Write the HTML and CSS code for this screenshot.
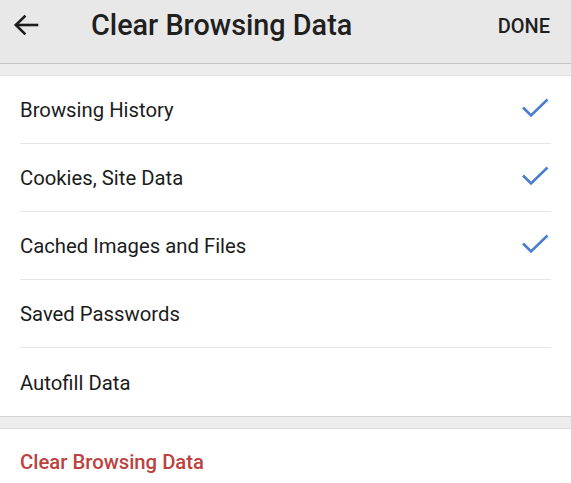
FILE: index.html
```html
<!DOCTYPE html>
<html lang="en">
<head>
<meta charset="utf-8">
<title>Clear Browsing Data</title>
<link rel="stylesheet" href="styles.css">
</head>
<body>
<header class="appbar">
  <button class="back" aria-label="Back">
    <svg width="26" height="22" viewBox="0 0 26 22" fill="none" stroke="#1c1c1c" stroke-width="2.6" stroke-linecap="square">
      <path d="M24 11H4"/>
      <path d="M11.5 2.5L2.8 11l8.7 8.5"/>
    </svg>
  </button>
  <h1 class="title">Clear Browsing Data</h1>
  <span class="done">DONE</span>
</header>
<div class="gap"></div>
<ul class="options">
  <li class="option"><span>Browsing History</span><svg class="check" width="28" height="20" viewBox="0 0 28 20" fill="none" stroke="#4a7dd0" stroke-width="2.6"><path d="M2 9.5l8 8L26.5 1.5"/></svg></li>
  <li class="option"><span>Cookies, Site Data</span><svg class="check" width="28" height="20" viewBox="0 0 28 20" fill="none" stroke="#4a7dd0" stroke-width="2.6"><path d="M2 9.5l8 8L26.5 1.5"/></svg></li>
  <li class="option"><span>Cached Images and Files</span><svg class="check" width="28" height="20" viewBox="0 0 28 20" fill="none" stroke="#4a7dd0" stroke-width="2.6"><path d="M2 9.5l8 8L26.5 1.5"/></svg></li>
  <li class="option"><span>Saved Passwords</span></li>
  <li class="option"><span>Autofill Data</span></li>
</ul>
<div class="gap"></div>
<div class="action">Clear Browsing Data</div>
</body>
</html>
```

FILE: styles.css
```css
* { box-sizing: border-box; }
html, body { margin: 0; padding: 0; }
body {
  width: 571px;
  height: 483px;
  overflow: hidden;
  background: #ffffff;
  font-family: Roboto, "Noto Sans", "Liberation Sans", sans-serif;
  color: #212121;
}
.appbar {
  height: 64px;
  background: #e8e8e8;
  border-bottom: 1px solid #c6c6c6;
  display: flex;
  align-items: flex-start;
  padding: 0 21px 0 13px;
}
.back {
  background: none;
  border: 0;
  padding: 0;
  margin: 14px 0 0 0;
  width: 26px;
  height: 22px;
  display: flex;
}
.title {
  margin: 6px 0 0 52px;
  font-size: 28.8px;
  font-weight: 500;
  line-height: 38px;
  color: #1f1f1f;
  flex: 1;
}
.done {
  margin-top: 13px;
  font-size: 20px;
  font-weight: 500;
  line-height: 26px;
  color: #1f1f1f;
}
.gap {
  height: 12px;
  background: #ededed;
  border-bottom: 1px solid #dcdcdc;
}
.options {
  list-style: none;
  margin: 0;
  padding: 0 20px;
  background: #fff;
  border-bottom: 1px solid #d2d2d2;
}
.option {
  height: 68px;
  display: flex;
  align-items: center;
  justify-content: space-between;
  font-size: 20.3px;
  color: #1c1c1c;
  border-bottom: 1px solid #e6e6e6;
  padding-top: 1px;
}
.option:last-child { border-bottom: 0; }
.check { margin-right: 2px; margin-top: -4px; }
.action {
  height: 66px;
  display: flex;
  align-items: center;
  padding: 0 20px;
  font-size: 20.3px;
  font-weight: 500;
  color: #bc4240;
}
```
